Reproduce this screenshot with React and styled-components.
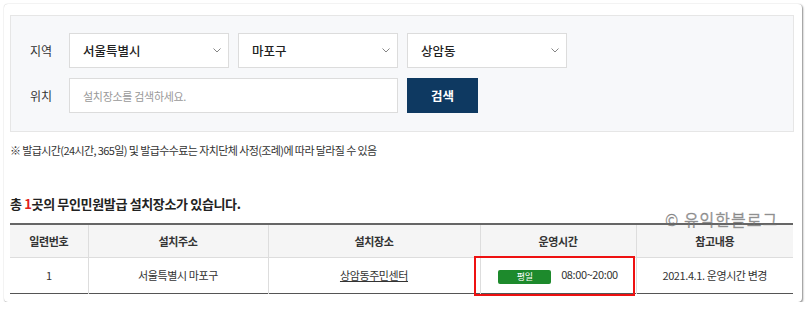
import React from 'react'
import styled, { createGlobalStyle } from 'styled-components'

const Global = createGlobalStyle`
  * { box-sizing: border-box; margin: 0; padding: 0; }
  body {
    background: #fff;
    font-family: "Noto Sans CJK KR", "Noto Sans", sans-serif;
    color: #333;
  }
`

const Card = styled.div`
  position: relative;
  margin: 4px 0 0 4px;
  width: 798px;
  height: 298px;
  background: #fff;
  border-radius: 4px;
  box-shadow: 1px 1px 2px rgba(0, 0, 0, 0.45), 0 0 1px rgba(0, 0, 0, 0.25);
  padding: 11px 8px 0 6px;
`

const Panel = styled.div`
  border: 1px solid #e6e6e6;
  background: #f7f8fa;
  padding: 17px 0 18px 19px;
  display: flex;
  flex-direction: column;
  gap: 10px;
`

const Row = styled.div`
  display: flex;
  align-items: center;
  gap: 9px;
`

const Label = styled.span`
  width: 30px;
  font-size: 12px;
  color: #333;
`

const Select = styled.div`
  width: 160px;
  height: 35px;
  background: #fff;
  border: 1px solid #dcdcdc;
  display: flex;
  align-items: center;
  justify-content: space-between;
  padding: 0 7px 0 13px;
  font-size: 12.5px;
  font-weight: 500;
  color: #222;
`

const Input = styled.div`
  width: 329px;
  height: 35px;
  background: #fff;
  border: 1px solid #dcdcdc;
  display: flex;
  align-items: center;
  padding-left: 13px;
  font-size: 11px;
  color: #999;
  letter-spacing: -0.3px;
`

const Button = styled.button`
  width: 71px;
  height: 35px;
  border: none;
  background: #0e3961;
  color: #fff;
  font-family: inherit;
  font-size: 12.5px;
  font-weight: 700;
`

const Note = styled.p`
  margin-top: 10px;
  font-size: 11px;
  letter-spacing: -0.6px;
  color: #333;
`

const Heading = styled.h3`
  margin-top: 36px;
  font-size: 13px;
  font-weight: 700;
  letter-spacing: -0.35px;
  color: #222;
  em { font-style: normal; color: #e02020; }
`

const Table = styled.table`
  margin-top: 10px;
  width: 783px;
  border-collapse: collapse;
  border-top: 2px solid #666;
  border-bottom: 1px solid #555;
  font-size: 11px;
  letter-spacing: -0.4px;
  th, td {
    text-align: center;
    border-left: 1px solid #ddd;
  }
  th:first-child, td:first-child { border-left: none; }
  th {
    height: 33px;
    background: #f5f5f5;
    font-weight: 700;
    color: #333;
    border-bottom: 1px solid #ddd;
  }
  td {
    height: 36px;
    color: #333;
  }
`

const Place = styled.span`
  text-decoration: underline;
`

const Badge = styled.span`
  display: inline-block;
  width: 53px;
  height: 14px;
  line-height: 14px;
  border-radius: 2px;
  background: #1d8a2c;
  color: #fff;
  font-size: 9px;
  margin-right: 10px;
  vertical-align: middle;
`

const Highlight = styled.div`
  position: absolute;
  left: 470px;
  top: 252px;
  width: 161px;
  height: 40px;
  border: 2px solid #ee1111;
`

const Watermark = styled.div`
  position: absolute;
  left: 661px;
  top: 203px;
  font-size: 16px;
  letter-spacing: 1px;
  color: rgba(120, 120, 120, 0.75);
  -webkit-text-stroke: 0.3px rgba(80, 80, 80, 0.5);
`

const Chevron = () => (
  <svg width="8" height="5" viewBox="0 0 8 5" fill="none">
    <path d="M0.5 0.5l3.5 3.5 3.5-3.5" stroke="#777" strokeWidth="0.9" />
  </svg>
)

export default function App() {
  const selects = ['서울특별시', '마포구', '상암동']
  return (
    <>
      <Global />
      <Card>
        <Panel>
          <Row>
            <Label>지역</Label>
            {selects.map((s) => (
              <Select key={s}>
                {s}
                <Chevron />
              </Select>
            ))}
          </Row>
          <Row>
            <Label>위치</Label>
            <Input>설치장소를 검색하세요.</Input>
            <Button>검색</Button>
          </Row>
        </Panel>
        <Note>※ 발급시간(24시간, 365일) 및 발급수수료는 자치단체 사정(조례)에 따라 달라질 수 있음</Note>
        <Heading>
          총 <em>1</em>곳의 무인민원발급 설치장소가 있습니다.
        </Heading>
        <Table>
          <colgroup>
            <col style={{ width: 78 }} />
            <col style={{ width: 180 }} />
            <col style={{ width: 212 }} />
            <col style={{ width: 156 }} />
            <col style={{ width: 157 }} />
          </colgroup>
          <thead>
            <tr>
              <th>일련번호</th>
              <th>설치주소</th>
              <th>설치장소</th>
              <th>운영시간</th>
              <th>참고내용</th>
            </tr>
          </thead>
          <tbody>
            <tr>
              <td>1</td>
              <td>서울특별시 마포구</td>
              <td><Place>상암동주민센터</Place></td>
              <td><Badge>평일</Badge>08:00~20:00</td>
              <td>2021.4.1. 운영시간 변경</td>
            </tr>
          </tbody>
        </Table>
        <Watermark>© 유익한블로그</Watermark>
        <Highlight />
      </Card>
    </>
  )
}
